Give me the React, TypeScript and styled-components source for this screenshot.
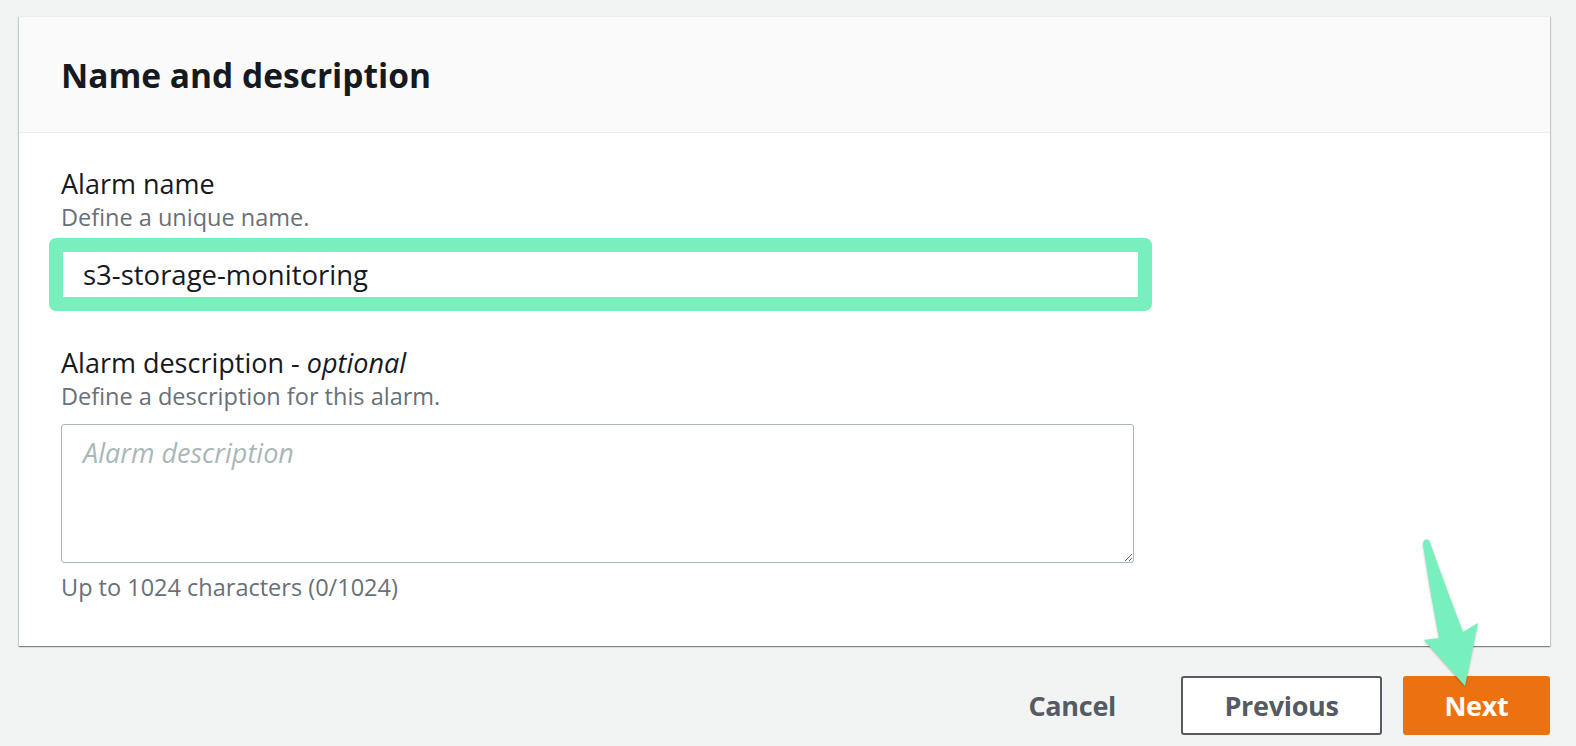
import styled, { createGlobalStyle } from 'styled-components';

const GlobalStyle = createGlobalStyle`
  html, body {
    margin: 0;
    padding: 0;
    background: #f2f3f3;
  }
  body {
    font-family: 'Open Sans', 'Liberation Sans', sans-serif;
    color: #16191f;
  }
`;

const Page = styled.div`
  position: relative;
  width: 1576px;
  height: 746px;
  box-sizing: border-box;
  padding: 16px 26px 0 19px;
  overflow: hidden;
`;

const Card = styled.section`
  background: #ffffff;
  border-top: 1px solid #eaeded;
  box-shadow: 0 1px 1px 0 rgba(0, 28, 36, 0.3), 1px 1px 1px 0 rgba(0, 28, 36, 0.15),
    -1px 1px 1px 0 rgba(0, 28, 36, 0.15);
`;

const CardHeader = styled.header`
  height: 115px;
  display: flex;
  align-items: center;
  padding: 0 42px;
  background: #fafafa;
  border-bottom: 1px solid #eaeded;
`;

const Title = styled.h2`
  margin: 0;
  font-size: 33.5px;
  font-weight: 700;
  color: #16191f;
`;

const CardBody = styled.div`
  padding: 35px 42px 44px;
  display: flex;
  flex-direction: column;
`;

const Field = styled.div<{ $gap?: number }>`
  display: flex;
  flex-direction: column;
  margin-bottom: ${({ $gap }) => $gap ?? 0}px;
`;

const Label = styled.label`
  font-size: 27px;
  line-height: 32px;
  color: #16191f;

  em {
    font-style: italic;
  }
`;

const Hint = styled.div<{ $top?: number }>`
  font-size: 23.5px;
  line-height: 30px;
  color: #687078;
  margin-top: ${({ $top }) => $top ?? 2}px;
`;

const Highlight = styled.div`
  margin: 6px 0 0 -12px;
  width: 1103px;
  box-sizing: border-box;
  border: 14px solid #78efbd;
  border-radius: 7px;
  background: #ffffff;
`;

const TextInput = styled.input`
  display: block;
  width: 100%;
  box-sizing: border-box;
  height: 45px;
  border: none;
  outline: none;
  padding: 0 20px;
  font-family: inherit;
  font-size: 27.5px;
  color: #16191f;
  background: transparent;
`;

const TextArea = styled.textarea`
  display: block;
  margin-top: 13px;
  width: 1073px;
  height: 139px;
  box-sizing: border-box;
  border: 1px solid #aab7b8;
  border-radius: 3px;
  padding: 12px 21px;
  font-family: inherit;
  font-size: 27px;
  line-height: 32px;
  color: #16191f;
  resize: both;
  outline: none;

  &::placeholder {
    color: #aab7b8;
    font-style: italic;
  }
`;

const Actions = styled.div`
  display: flex;
  justify-content: flex-end;
  align-items: center;
  gap: 21px;
  margin-top: 30px;
`;

const Button = styled.button<{ $variant: 'link' | 'normal' | 'primary' }>`
  height: 59px;
  box-sizing: border-box;
  border-radius: 3px;
  font-family: inherit;
  font-size: 27px;
  font-weight: 700;
  cursor: pointer;
  padding: 0 20px;
  letter-spacing: -0.3px;
  ${({ $variant }) =>
    $variant === 'link'
      ? `
    background: transparent;
    border: 2px solid transparent;
    color: #545b64;
    margin-right: 22px;
  `
      : $variant === 'normal'
        ? `
    width: 201px;
    background: #ffffff;
    border: 2px solid #545b64;
    color: #545b64;
  `
        : `
    width: 147px;
    background: #ec7211;
    border: 2px solid #ec7211;
    color: #ffffff;
  `}
`;

const Arrow = styled.svg`
  position: absolute;
  left: 0;
  top: 0;
  pointer-events: none;
  filter: drop-shadow(0 1px 1px rgba(0, 0, 0, 0.25));
`;

export default function App() {
  return (
    <>
      <GlobalStyle />
      <Page>
        <Card>
          <CardHeader>
            <Title>Name and description</Title>
          </CardHeader>
          <CardBody>
            <Field $gap={36}>
              <Label>Alarm name</Label>
              <Hint>Define a unique name.</Hint>
              <Highlight>
                <TextInput defaultValue="s3-storage-monitoring" />
              </Highlight>
            </Field>
            <Field>
              <Label>
                Alarm description - <em>optional</em>
              </Label>
              <Hint>Define a description for this alarm.</Hint>
              <TextArea placeholder="Alarm description" />
              <Hint $top={9}>Up to 1024 characters (0/1024)</Hint>
            </Field>
          </CardBody>
        </Card>
        <Actions>
          <Button $variant="link">Cancel</Button>
          <Button $variant="normal">Previous</Button>
          <Button $variant="primary">Next</Button>
        </Actions>
        <Arrow width="1576" height="746" viewBox="0 0 1576 746">
          <path
            d="M1423 545 Q1423 538 1429 540 Q1446 588 1463 632 L1478 623 L1465 686 L1424 640 L1439 638 Q1430 592 1423 545 Z"
            fill="#78f0be"
          />
        </Arrow>
      </Page>
    </>
  );
}
